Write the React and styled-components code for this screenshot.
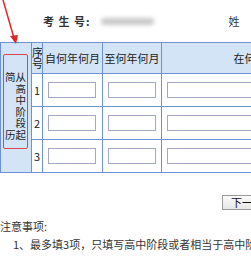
import React from "react";
import styled, { createGlobalStyle } from "styled-components";

const Global = createGlobalStyle`
  html, body { margin: 0; padding: 0; background: #fff; overflow: hidden; }
  body { font-family: "Noto Sans CJK SC", "DejaVu Sans", sans-serif; font-size: 12px; color: #222; }
`;

const Page = styled.div`
  position: relative;
  width: 420px;
`;

const Arrow = styled.svg`
  position: absolute;
  left: 0;
  top: 0;
  pointer-events: none;
`;

const TopBar = styled.div`
  display: flex;
  align-items: center;
  height: 42px;
  padding-left: 43px;
  box-sizing: border-box;
`;

const Label = styled.span`
  font-weight: bold;
  font-size: 11px;
  letter-spacing: 1px;
  color: #333;
`;

const Blurred = styled.div`
  margin-left: ${(p) => p.$gap}px;
  width: ${(p) => p.$w}px;
  height: 7px;
  border-radius: 4px;
  background: #c8c8c8;
  filter: blur(2px);
`;

const Name = styled.span`
  margin-left: 75px;
  font-size: 11px;
  color: #333;
`;

const Table = styled.table`
  border-collapse: collapse;
  table-layout: fixed;
  width: 404px;
  border: 1px solid #6f8fd6;
`;

const Th = styled.th`
  height: 30px;
  padding: 0;
  background: #d3e4f7;
  border: 1px solid #6f8fd6;
  font-weight: normal;
  font-size: 11px;
  color: #222;
  text-align: center;
  line-height: 11px;
  white-space: nowrap;
  overflow: hidden;
`;

const SideCell = styled.td`
  background: #d3e4f7;
  border: 1px solid #6f8fd6;
  padding: 0 0 0 2px;
  vertical-align: top;
`;

const RedBox = styled.div`
  box-sizing: border-box;
  margin-top: 11px;
  width: 25px;
  height: 95px;
  padding: 8px 1px 0 0;
  border: 1.5px solid #d8474f;
  border-radius: 2px;
  display: flex;
  flex-direction: column;
  justify-content: center;
  align-items: flex-end;
  font-size: 10.5px;
  color: #222;
`;

const Line = styled.span`
  display: block;
  height: 11.5px;
  line-height: 11.5px;
  text-align: right;
  white-space: nowrap;
`;

const Td = styled.td`
  height: 32px;
  padding: 0;
  border: 1px solid #6f8fd6;
  text-align: ${(p) => (p.$center ? "center" : "left")};
  vertical-align: middle;
  font-size: 11px;
`;

const Field = styled.input`
  display: block;
  box-sizing: border-box;
  margin-left: 5px;
  width: ${(p) => p.$w}px;
  height: 16px;
  border: 1px solid #a3a8c6;
  background: #fff;
  padding: 0;
`;

const ButtonRow = styled.div`
  padding: 20px 0 0 222px;
`;

const Button = styled.button`
  height: 15px;
  padding: 0 8px;
  border: 1px solid #9a9a9a;
  background: linear-gradient(#fbfbfb, #e6e6e6);
  font-family: inherit;
  font-size: 11px;
  line-height: 12px;
  color: #111;
`;

const Notes = styled.div`
  padding-top: 8px;
  font-size: 11px;
  color: #333;
`;

const NoteTitle = styled.div`
  line-height: 16px;
`;

const NoteItem = styled.div`
  margin-top: 2px;
  padding-left: 13px;
  white-space: nowrap;
  line-height: 16px;
`;

const rows = [1, 2, 3];

export default function App() {
  return (
    <Page>
      <Global />
      <TopBar>
        <Label>考 生 号:</Label>
        <Blurred $gap={10} $w={53} />
        <Name>姓</Name>
      </TopBar>
      <Table>
        <colgroup>
          <col style={{ width: 31 }} />
          <col style={{ width: 11 }} />
          <col style={{ width: 60 }} />
          <col style={{ width: 59 }} />
          <col style={{ width: 243 }} />
        </colgroup>
        <tbody>
          <tr>
            <SideCell rowSpan={4}>
              <RedBox>
                <Line>简从</Line>
                <Line>高</Line>
                <Line>中</Line>
                <Line>阶</Line>
                <Line>段</Line>
                <Line>历起</Line>
              </RedBox>
            </SideCell>
            <Th>
              序<br />号
            </Th>
            <Th>自何年何月</Th>
            <Th>至何年何月</Th>
            <Th>在何学校何专业学习</Th>
          </tr>
          {rows.map((n) => (
            <tr key={n}>
              <Td $center>{n}</Td>
              <Td>
                <Field $w={48} />
              </Td>
              <Td>
                <Field $w={48} />
              </Td>
              <Td>
                <Field $w={228} />
              </Td>
            </tr>
          ))}
        </tbody>
      </Table>
      <ButtonRow>
        <Button>下一步</Button>
      </ButtonRow>
      <Notes>
        <NoteTitle>注意事项:</NoteTitle>
        <NoteItem>1、最多填3项，只填写高中阶段或者相当于高中阶段教育及以后的学习经历</NoteItem>
      </Notes>
      <Arrow width="30" height="50" viewBox="0 0 30 50">
        <line x1="3" y1="0" x2="14" y2="38" stroke="#e0262b" strokeWidth="1.5" />
        <polygon points="10,36 18,35 16,44" fill="#e0262b" />
      </Arrow>
    </Page>
  );
}
